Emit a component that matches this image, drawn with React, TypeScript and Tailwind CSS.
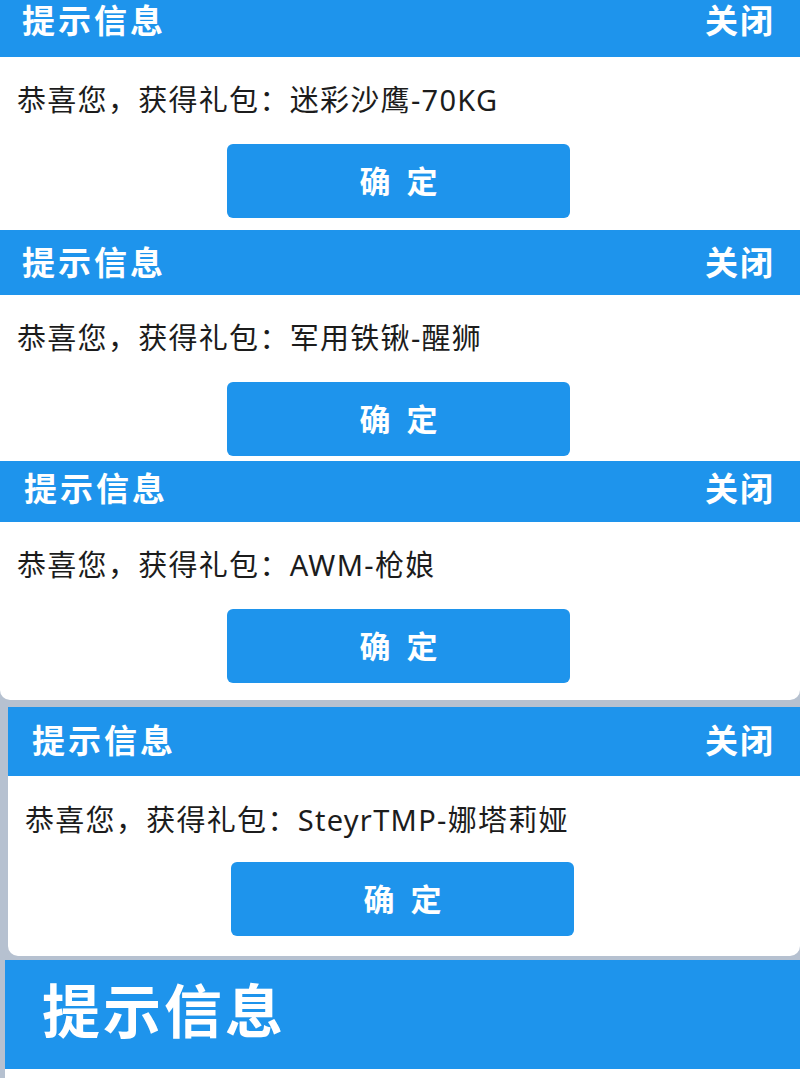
import React from "react"

const font = { fontFamily: "'Noto Sans', 'Noto Sans CJK SC', sans-serif" }

interface PanelProps {
  prize: string
  headerClass: string
  bodyClass: string
  wrapClass?: string
  textClass?: string
  titleClass?: string
  gapClass?: string
}

function Panel({
  prize,
  headerClass,
  bodyClass,
  wrapClass = "",
  textClass = "pl-[17px]",
  titleClass = "pl-[22px]",
  gapClass = "mt-[29px]",
}: PanelProps) {
  return (
    <div className={wrapClass}>
      {/* Header */}
      <div className={"flex items-center justify-between bg-[#1e94ec] pr-[25px] text-white " + headerClass}>
        <span className={"text-[33px] font-bold leading-none tracking-[3px] " + titleClass}>提示信息</span>
        <span className="text-[33px] font-bold leading-none tracking-[2px]">关闭</span>
      </div>

      {/* Body */}
      <div className={"flex flex-col bg-white " + bodyClass}>
        <p className={"text-[29px] leading-[30px] tracking-[1.3px] text-[#1c1c1c] " + textClass}>
          恭喜您，获得礼包：{prize}
        </p>
        <div className={"flex justify-center pr-[3px] " + gapClass}>
          <button className="h-[74px] w-[343px] rounded-md bg-[#1e94ec] pl-[4px] text-[31px] font-bold tracking-[4px] text-white">
            确 定
          </button>
        </div>
      </div>
    </div>
  )
}

export default function App() {
  return (
    <div className="h-[1078px] w-[800px] overflow-hidden bg-white" style={font}>
      <Panel
        prize="迷彩沙鹰-70KG"
        headerClass="h-[57px] pb-4"
        bodyClass="pt-[28px] pb-[12px]"
      />
      <Panel
        prize="军用铁锹-醒狮"
        headerClass="h-[65px]"
        bodyClass="pt-[28px] pb-[5px]"
      />

      <div className="bg-[#b6c1d0]">
        <Panel
          prize="AWM-枪娘"
          headerClass="h-[61px] pb-[6px]"
          bodyClass="pt-[28px] pb-[17px] rounded-b-[10px]"
          titleClass="pl-[24px]"
        />

        <div className="pl-[8px] pt-[7px]">
          <Panel
            prize="SteyrTMP-娜塔莉娅"
            headerClass="h-[69px] pb-[2px]"
            bodyClass="pt-[29px] pb-[20px] rounded-b-[10px]"
            titleClass="pl-[24px]"
            gapClass="mt-[27px]"
          />
        </div>

        <div className="pl-[5px] pt-[4px]">
          <div className="flex h-[109px] items-center bg-[#1e94ec] pb-[8px] pl-[37px] text-white">
            <span className="text-[58px] font-bold leading-none tracking-[3px]">提示信息</span>
          </div>
          <div className="h-[20px] bg-white"></div>
        </div>
      </div>
    </div>
  )
}
